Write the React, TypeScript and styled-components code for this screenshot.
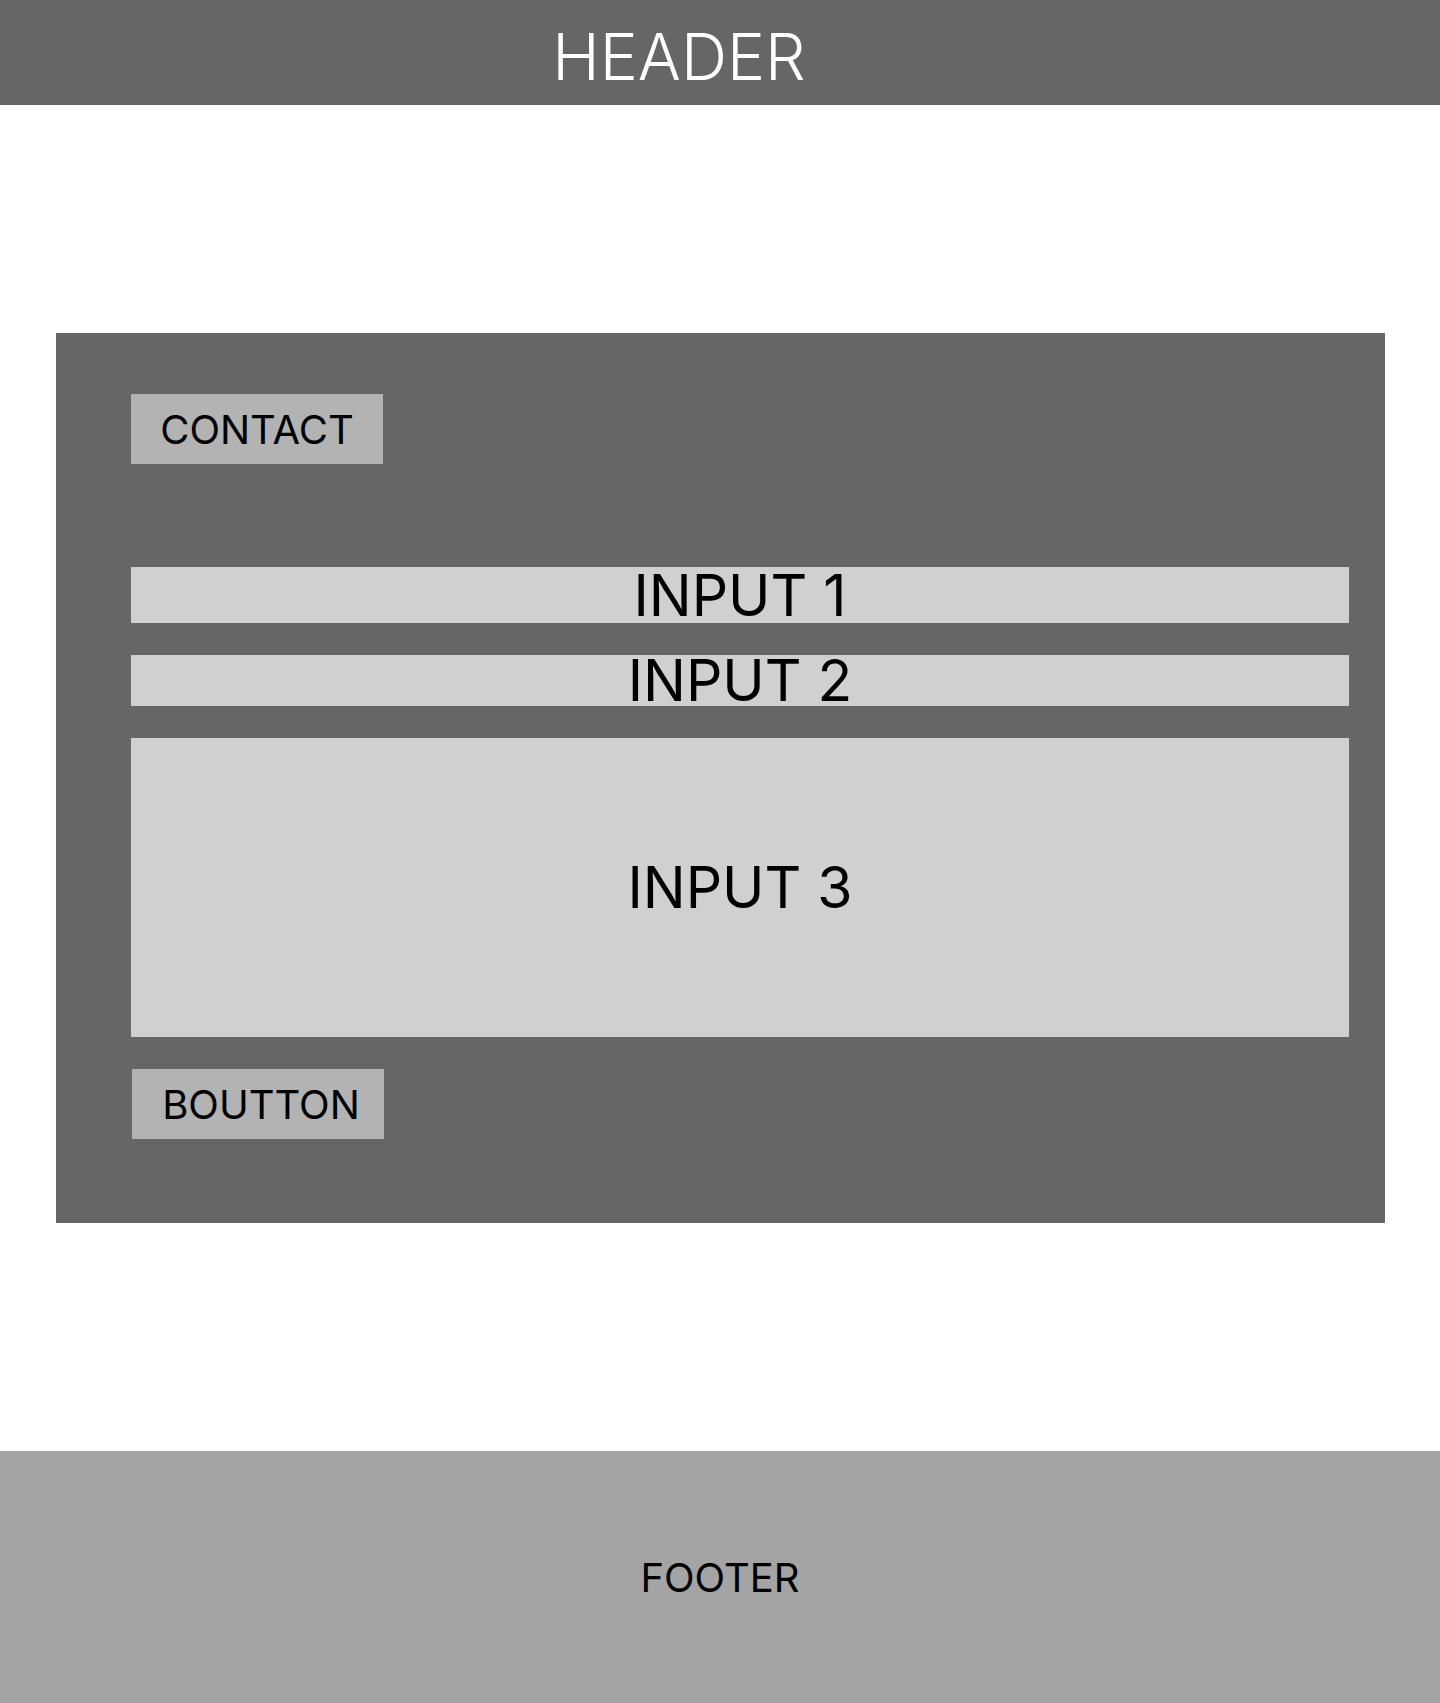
import styled, { createGlobalStyle } from "styled-components";

const GlobalStyle = createGlobalStyle`
  body {
    margin: 0;
    font-family: Inter, "Noto Sans", sans-serif;
    background: #ffffff;
  }
`;

const Page = styled.div`
  display: flex;
  flex-direction: column;
  min-height: 1703px;
`;

const Header = styled.header`
  height: 105px;
  box-sizing: border-box;
  background: #666666;
  display: flex;
  align-items: center;
  justify-content: center;
  padding: 8px 82px 0 0;
  color: #ffffff;
  font-size: 64px;
  font-weight: 300;
`;

const Main = styled.main`
  padding: 228px 55px 228px 56px;
`;

const Panel = styled.section`
  background: #666666;
  padding: 61px 36px 84px 75px;
  display: flex;
  flex-direction: column;
  align-items: flex-start;
`;

// small grey label box, used for the title and the submit button
const Tag = styled.div<{ $shift?: number }>`
  width: 252px;
  height: 70px;
  margin-left: ${(p) => p.$shift ?? 0}px;
  padding-left: ${(p) => (p.$shift ? 6 : 0)}px;
  background: #b3b3b3;
  color: #000000;
  font-size: 40px;
  font-weight: 400;
  display: flex;
  align-items: center;
  justify-content: center;
  box-sizing: border-box;
`;

const Form = styled.div`
  margin-top: 103px;
  align-self: stretch;
  display: flex;
  flex-direction: column;
  gap: 32px;
`;

const Field = styled.div<{ $h: number }>`
  height: ${(p) => p.$h}px;
  background: #d0d0d0;
  color: #000000;
  font-size: 57px;
  font-weight: 400;
  display: flex;
  align-items: center;
  justify-content: center;
`;

const Footer = styled.footer`
  height: 252px;
  background: #a4a4a4;
  display: flex;
  align-items: center;
  justify-content: center;
  font-size: 40px;
  color: #000000;
`;

export default function App() {
  return (
    <>
      <GlobalStyle />
      <Page>
        <Header>HEADER</Header>
        <Main>
          <Panel>
            <Tag>CONTACT</Tag>
            <Form>
              <Field $h={56}>INPUT 1</Field>
              <Field $h={51}>INPUT 2</Field>
              <Field $h={299}>INPUT 3</Field>
              <Tag $shift={1}>BOUTTON</Tag>
            </Form>
          </Panel>
        </Main>
        <Footer>FOOTER</Footer>
      </Page>
    </>
  );
}
